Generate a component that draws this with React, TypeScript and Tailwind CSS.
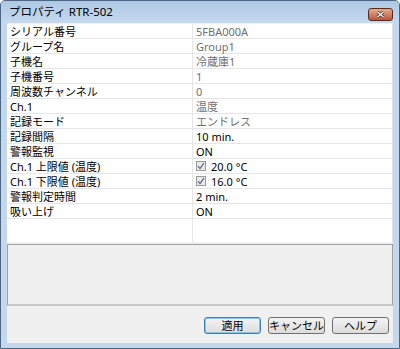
const rows: { label: string; value: string; ro?: boolean; check?: boolean }[] = [
  { label: "シリアル番号", value: "5FBA000A", ro: true },
  { label: "グループ名", value: "Group1", ro: true },
  { label: "子機名", value: "冷蔵庫1", ro: true },
  { label: "子機番号", value: "1", ro: true },
  { label: "周波数チャンネル", value: "0", ro: true },
  { label: "Ch.1", value: "温度", ro: true },
  { label: "記録モード", value: "エンドレス", ro: true },
  { label: "記録間隔", value: "10 min." },
  { label: "警報監視", value: "ON" },
  { label: "Ch.1 上限値 (温度)", value: "20.0 °C", check: true },
  { label: "Ch.1 下限値 (温度)", value: "16.0 °C", check: true },
  { label: "警報判定時間", value: "2 min." },
  { label: "吸い上げ", value: "ON" },
];

function CheckBox() {
  return (
    <span className="w-[10px] h-[10px] border border-[#9a9a9a] bg-[#eaeaea] flex items-center justify-center">
      <svg width="8" height="8" viewBox="0 0 8 8">
        <path d="M1 4 L3 6.5 L7 1" fill="none" stroke="#4a5f80" strokeWidth="1.2" />
      </svg>
    </span>
  );
}

function Btn({ label, focus }: { label: string; focus?: boolean }) {
  return (
    <button
      className={`w-[57px] h-[17px] rounded-[3px] border text-[11px] leading-none text-black bg-gradient-to-b from-[#f4f4f4] to-[#dcdcdc] flex items-center justify-center ${
        focus ? "border-[#3c7fb1] shadow-[inset_0_0_0_1px_#8ec3e6]" : "border-[#707070]"
      }`}
    >
      {label}
    </button>
  );
}

export default function App() {
  return (
    <div
      className="w-[400px] h-[349px] bg-[#c3d8ed] border border-[#4b6784] rounded-t-[5px] flex flex-col overflow-hidden"
      style={{ fontFamily: '"Noto Sans", "Noto Sans CJK JP", sans-serif' }}
    >
      {/* Title bar */}
      <div className="h-[22px] shrink-0 flex items-start justify-between pl-[8px] pr-[6px] bg-gradient-to-b from-[#aec8e3] to-[#c5daef]">
        <span className="text-[11.5px] text-black mt-[5px] leading-none">プロパティ RTR-502</span>
        <div className="mt-[7px] w-[25px] h-[13px] rounded-[3px] border border-[#5a2a1c] bg-gradient-to-b from-[#e3ab92] to-[#b8583c] flex items-center justify-center">
          <svg width="9" height="7" viewBox="0 0 9 7">
            <path d="M1.5 1 L7.5 6 M7.5 1 L1.5 6" stroke="#3b1a10" strokeWidth="2.6" />
            <path d="M1.5 1 L7.5 6 M7.5 1 L1.5 6" stroke="#ffffff" strokeWidth="1.4" />
          </svg>
        </div>
      </div>

      {/* Client area */}
      <div className="flex-1 mx-[6px] mb-[5px] bg-[#f0f0f0] flex flex-col">
        {/* Property grid */}
        <div className="h-[218px] mt-[1px] bg-white border-r border-[#d8e4f0] flex flex-col">
          {rows.map((r) => (
            <div key={r.label} className="h-[15px] shrink-0 flex border-b border-[#e6e6e6] text-[11px] leading-none">
              <div className="w-[186px] pl-[3px] flex items-center text-black border-r border-[#e6e6e6]">
                {r.label}
              </div>
              <div
                className={`flex-1 pl-[3px] flex items-center gap-[5px] ${r.ro ? "text-[#707070]" : "text-black"}`}
              >
                {r.check && <CheckBox />}
                {r.value}
              </div>
            </div>
          ))}
          <div className="flex-1 flex">
            <div className="w-[186px] border-r border-[#e6e6e6]" />
          </div>
        </div>

        {/* Description panel */}
        <div className="mt-[2px] h-[62px] border border-[#a0a0a0] border-b-2 border-b-[#c8c8c8] bg-[#f0f0f0]" />

        {/* Buttons */}
        <div className="mt-[11px] flex justify-end gap-[7px] pr-[4px]">
          <Btn label="適用" focus />
          <Btn label="キャンセル" />
          <Btn label="ヘルプ" />
        </div>
      </div>
    </div>
  );
}
